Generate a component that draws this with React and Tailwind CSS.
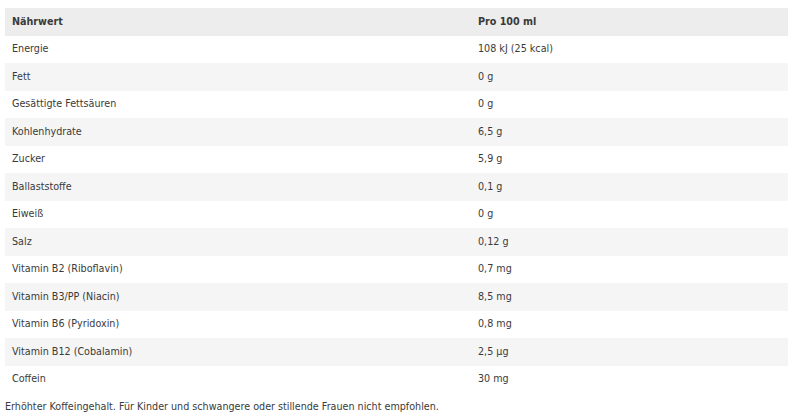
import React from 'react';

const rows = [
    ["Energie", "108 kJ (25 kcal)"],
    ["Fett", "0 g"],
    ["Gesättigte Fettsäuren", "0 g"],
    ["Kohlenhydrate", "6,5 g"],
    ["Zucker", "5,9 g"],
    ["Ballaststoffe", "0,1 g"],
    ["Eiweiß", "0 g"],
    ["Salz", "0,12 g"],
    ["Vitamin B2 (Riboflavin)", "0,7 mg"],
    ["Vitamin B3/PP (Niacin)", "8,5 mg"],
    ["Vitamin B6 (Pyridoxin)", "0,8 mg"],
    ["Vitamin B12 (Cobalamin)", "2,5 µg"],
    ["Coffein", "30 mg"],
];

export default function App() {
    return (
        <div className="bg-white w-[799px] h-[419px] px-[5px] pt-[8px] text-[9.6px] text-[#3a3a3a] font-['DejaVu_Sans',sans-serif]">
            <table className="w-[783px] border-collapse table-fixed">
                <thead>
                    <tr className="bg-[#ededed] h-[27.5px]">
                        <th className="w-[466px] text-left font-bold px-[7px] py-0">Nährwert</th>
                        <th className="text-left font-bold px-[7px] py-0">Pro 100 ml</th>
                    </tr>
                </thead>
                <tbody>
                    {rows.map(([name, value], i) => (
                        <tr key={name} className={i % 2 === 1 ? "bg-[#f5f5f5] h-[27.5px]" : "bg-white h-[27.5px]"}>
                            <td className="px-[7px] py-0">{name}</td>
                            <td className="px-[7px] py-0">{value}</td>
                        </tr>
                    ))}
                </tbody>
            </table>
            <p className="mt-[7px] leading-[14px]">Erhöhter Koffeingehalt. Für Kinder und schwangere oder stillende Frauen nicht empfohlen.</p>
        </div>
    );
}
